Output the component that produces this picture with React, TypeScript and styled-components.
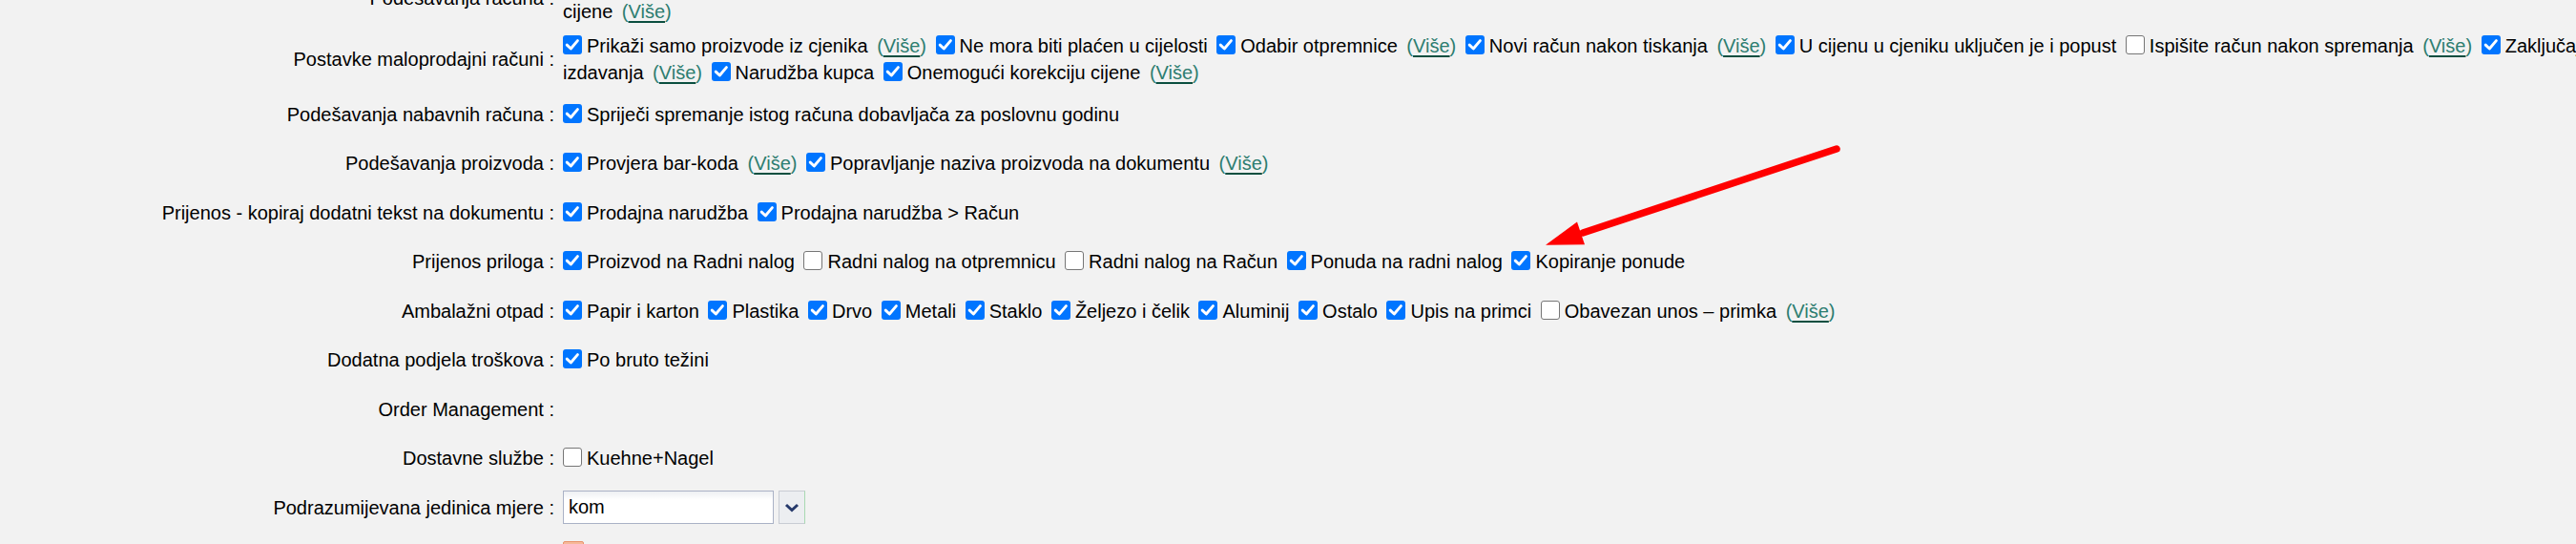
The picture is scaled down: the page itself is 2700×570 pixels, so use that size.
import React from "react";
import styled, { createGlobalStyle } from "styled-components";

const GlobalStyle = createGlobalStyle`
  html, body {
    margin: 0;
    padding: 0;
    background: #f2f2f2;
    overflow: hidden;
  }
  body {
    font-family: "Liberation Sans", Arial, sans-serif;
    font-size: 20px;
    color: #000;
  }
`;

const Screen = styled.div`
  position: relative;
  width: 2700px;
  height: 570px;
  overflow: hidden;
`;

const Form = styled.div`
  display: flex;
  flex-direction: column;
  width: 2880px;
  margin-top: -34px;
`;

const Row = styled.div`
  display: flex;
  align-items: center;
  min-height: 51.5px;
  padding: 4px 0;
  box-sizing: border-box;
`;

const Label = styled.div`
  flex: 0 0 581px;
  text-align: right;
  line-height: 28px;
  white-space: nowrap;
`;

const Value = styled.div`
  flex: 0 0 2270px;
  box-sizing: border-box;
  padding-left: 9px;
  line-height: 28px;
`;

const Box = styled.span<{ $on: boolean }>`
  display: inline-block;
  box-sizing: border-box;
  width: 20px;
  height: 20px;
  margin-right: 5px;
  vertical-align: -2px;
  border-radius: 3px;
  background: ${(p) => (p.$on ? "#0075ff" : "#ffffff")};
  border: ${(p) => (p.$on ? "none" : "1.5px solid #767676")};
  svg {
    display: block;
  }
`;

const Txt = styled.span`
  margin-right: 4px;
`;

const More = styled.a`
  color: #2d7d70;
  margin-right: 4px;
  text-decoration: none;
  cursor: pointer;
`;

const MoreWord = styled.span`
  text-decoration: underline;
  text-decoration-color: #0b4f40;
  text-decoration-thickness: 2px;
  text-underline-offset: 3px;
`;

const SelectGroup = styled.div`
  display: flex;
  align-items: stretch;
  gap: 5px;
  height: 35px;
`;

const SelectInput = styled.div`
  box-sizing: border-box;
  width: 221px;
  height: 35px;
  padding-left: 5px;
  line-height: 33px;
  border: 1px solid #aab2c6;
  background: linear-gradient(#eef0f3 0, #ffffff 9px);
`;

const SelectButton = styled.div`
  box-sizing: border-box;
  width: 28px;
  height: 35px;
  display: flex;
  align-items: center;
  justify-content: center;
  border: 1px solid #c8ccd4;
  border-right-color: #a9d9b2;
  background: #eceef1;
`;

const Swatch = styled.div`
  box-sizing: border-box;
  width: 22px;
  height: 32px;
  border: 1px solid #e8936b;
  border-radius: 2px;
  background: #f6b99a;
`;

const Overlay = styled.svg`
  position: absolute;
  left: 0;
  top: 0;
  pointer-events: none;
`;

type Item = { on: boolean; text: string; more?: boolean };

const Check = () => (
  <svg width="20" height="20" viewBox="0 0 20 20">
    <path
      d="M4.2 10.1 L8.3 14 L15.4 5.6"
      fill="none"
      stroke="#ffffff"
      strokeWidth="2.9"
      strokeLinecap="round"
      strokeLinejoin="round"
    />
  </svg>
);

const Opt: React.FC<Item> = ({ on, text, more }) => (
  <>
    <Box $on={on}>{on && <Check />}</Box>
    <Txt>{text}</Txt>
    {more && (
      <>
        {" "}
        <More>
          (<MoreWord>Više</MoreWord>)
        </More>
      </>
    )}
  </>
);

const Options: React.FC<{ items: Item[] }> = ({ items }) => (
  <>
    {items.map((it, i) => (
      <React.Fragment key={i}>
        {i > 0 && " "}
        <Opt {...it} />
      </React.Fragment>
    ))}
  </>
);

const rows: { label: string; items: Item[] }[] = [
  {
    label: "Podešavanja računa",
    items: [
      { on: true, text: "Prikaži rabat na računu", more: true },
      { on: true, text: "Prikaži ukupni popust" },
      { on: true, text: "Upozori na negativnu zalihu", more: true },
      { on: false, text: "Dozvoli prodaju bez zalihe" },
      { on: true, text: "Prikaži šifru proizvoda na ispisu", more: true },
      { on: true, text: "Prikaži cijenu s PDV-om" },
      { on: true, text: "Zaokruži iznos računa", more: true },
      { on: true, text: "Upozori kod prodaje cijene", more: true },
    ],
  },
  {
    label: "Postavke maloprodajni računi",
    items: [
      { on: true, text: "Prikaži samo proizvode iz cjenika", more: true },
      { on: true, text: "Ne mora biti plaćen u cijelosti" },
      { on: true, text: "Odabir otpremnice", more: true },
      { on: true, text: "Novi račun nakon tiskanja", more: true },
      { on: true, text: "U cijenu u cjeniku uključen je i popust" },
      { on: false, text: "Ispišite račun nakon spremanja", more: true },
      { on: true, text: "Zaključaj račun nakon izdavanja", more: true },
      { on: true, text: "Narudžba kupca" },
      { on: true, text: "Onemogući korekciju cijene", more: true },
    ],
  },
  {
    label: "Podešavanja nabavnih računa",
    items: [
      { on: true, text: "Spriječi spremanje istog računa dobavljača za poslovnu godinu" },
    ],
  },
  {
    label: "Podešavanja proizvoda",
    items: [
      { on: true, text: "Provjera bar-koda", more: true },
      { on: true, text: "Popravljanje naziva proizvoda na dokumentu", more: true },
    ],
  },
  {
    label: "Prijenos - kopiraj dodatni tekst na dokumentu",
    items: [
      { on: true, text: "Prodajna narudžba" },
      { on: true, text: "Prodajna narudžba > Račun" },
    ],
  },
  {
    label: "Prijenos priloga",
    items: [
      { on: true, text: "Proizvod na Radni nalog" },
      { on: false, text: "Radni nalog na otpremnicu" },
      { on: false, text: "Radni nalog na Račun" },
      { on: true, text: "Ponuda na radni nalog" },
      { on: true, text: "Kopiranje ponude" },
    ],
  },
  {
    label: "Ambalažni otpad",
    items: [
      { on: true, text: "Papir i karton" },
      { on: true, text: "Plastika" },
      { on: true, text: "Drvo" },
      { on: true, text: "Metali" },
      { on: true, text: "Staklo" },
      { on: true, text: "Željezo i čelik" },
      { on: true, text: "Aluminij" },
      { on: true, text: "Ostalo" },
      { on: true, text: "Upis na primci" },
      { on: false, text: "Obavezan unos – primka", more: true },
    ],
  },
  {
    label: "Dodatna podjela troškova",
    items: [{ on: true, text: "Po bruto težini" }],
  },
  { label: "Order Management", items: [] },
  {
    label: "Dostavne službe",
    items: [{ on: false, text: "Kuehne+Nagel" }],
  },
];

export default function App() {
  return (
    <>
      <GlobalStyle />
      <Screen>
        <Form>
          {rows.map((r) => (
            <Row key={r.label}>
              <Label>{r.label} :</Label>
              <Value>
                <Options items={r.items} />
              </Value>
            </Row>
          ))}
          <Row>
            <Label>Podrazumijevana jedinica mjere :</Label>
            <Value>
              <SelectGroup>
                <SelectInput>kom</SelectInput>
                <SelectButton>
                  <svg width="16" height="10" viewBox="0 0 16 10">
                    <path
                      d="M2 2 L8 7.5 L14 2"
                      fill="none"
                      stroke="#26396b"
                      strokeWidth="3"
                      strokeLinejoin="miter"
                    />
                  </svg>
                </SelectButton>
              </SelectGroup>
            </Value>
          </Row>
          <Row>
            <Label>Boja dokumenta :</Label>
            <Value>
              <Swatch />
            </Value>
          </Row>
        </Form>
        <Overlay width="2700" height="570" viewBox="0 0 2700 570">
          <line
            x1="1925"
            y1="156"
            x2="1659"
            y2="244"
            stroke="#ff0000"
            strokeWidth="7.5"
            strokeLinecap="round"
          />
          <polygon points="1620,256.7 1653,232.5 1661,256.3" fill="#ff0000" />
        </Overlay>
      </Screen>
    </>
  );
}
